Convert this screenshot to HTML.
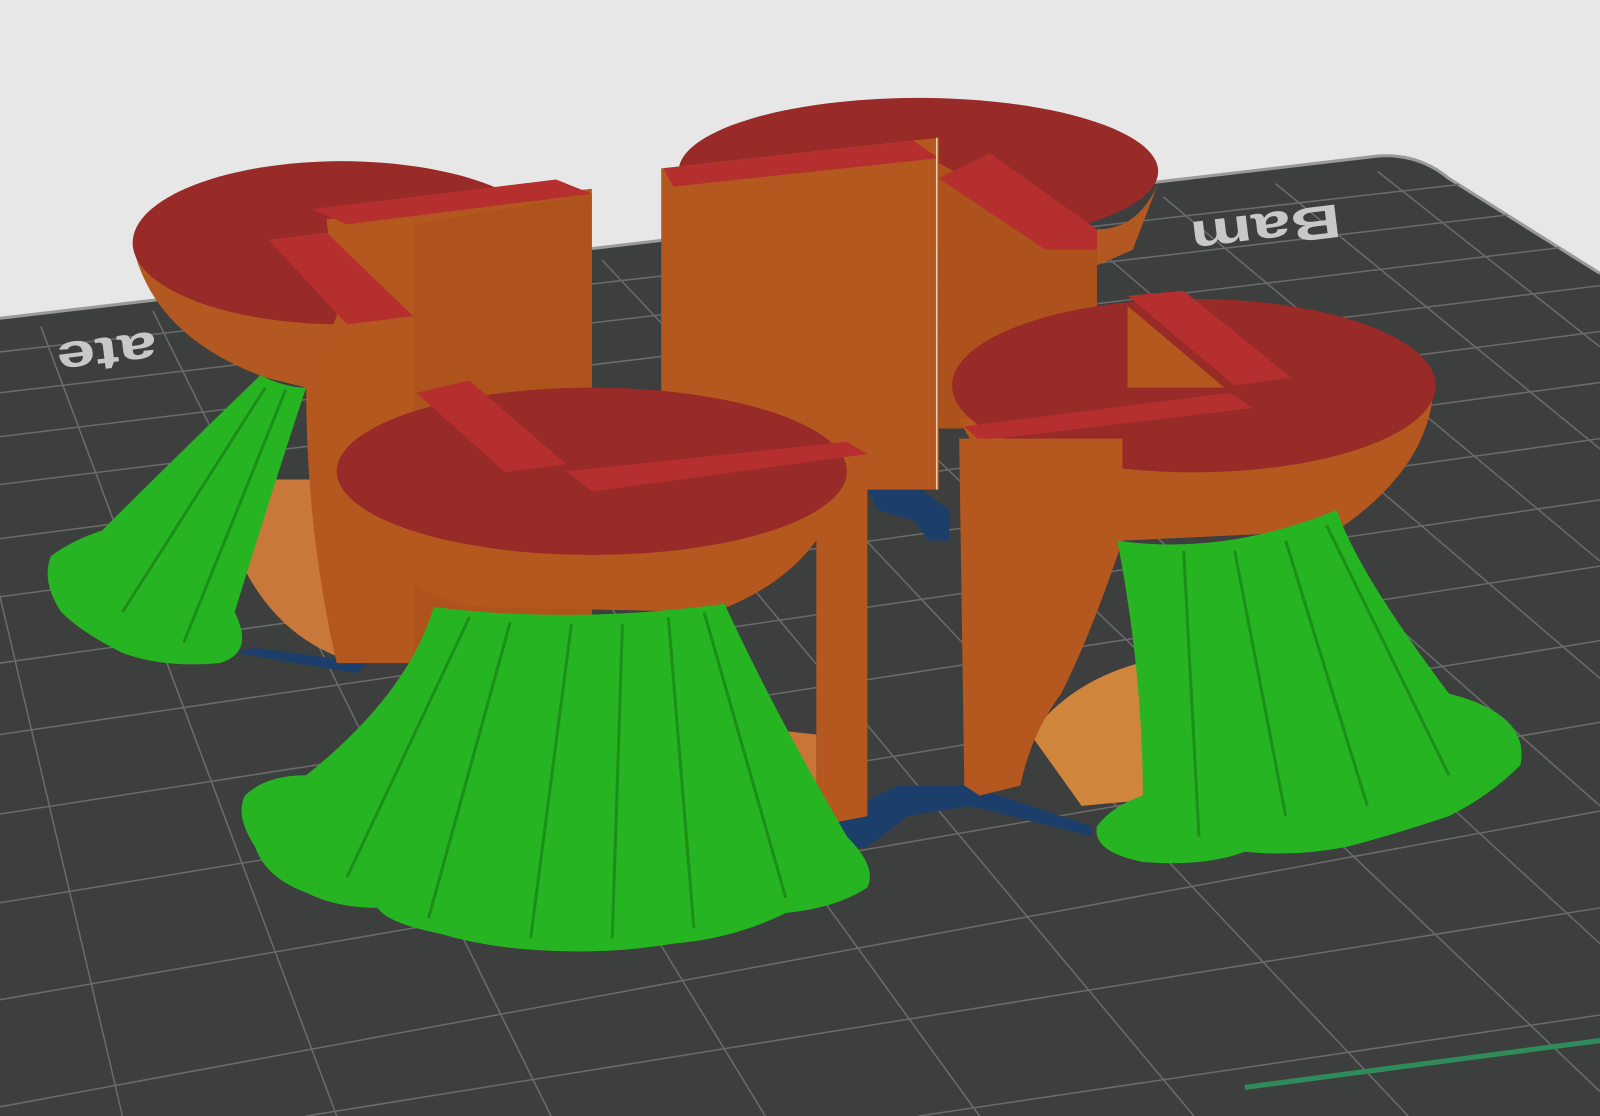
<!DOCTYPE html>
<html><head><meta charset="utf-8"><style>html,body{margin:0;padding:0;background:#e8e8e8;overflow:hidden}svg{display:block}</style></head>
<body>
<svg width="1600" height="1116" viewBox="0 0 1568 1094" preserveAspectRatio="none" xmlns="http://www.w3.org/2000/svg">
<rect width="1568" height="1094" fill="#e7e7e7"/>
<defs><clipPath id="bed"><path d="M0 312 L1350 153 Q1390 150 1420 175 L1568 268 L1568 1094 L0 1094 Z"/></clipPath></defs>
<path d="M0 312 L1350 153 Q1390 150 1420 175 L1568 268 L1568 1094 L0 1094 Z" fill="#3d3e3e"/>
<path d="M0 312 L1350 153 Q1390 150 1420 175 L1568 268" fill="none" stroke="#9a9a9a" stroke-width="3"/>
<g clip-path="url(#bed)" stroke="#6a6b6b" stroke-width="1.5" fill="none">
<path d="M0 345 L1568 165"/><path d="M0 385 L1568 200"/><path d="M0 428 L1568 238"/><path d="M0 475 L1568 280"/><path d="M0 528 L1568 325"/><path d="M0 585 L1568 375"/><path d="M0 650 L1568 430"/><path d="M0 720 L1568 490"/><path d="M0 798 L1568 555"/><path d="M0 885 L1568 628"/><path d="M0 980 L1568 708"/><path d="M0 1085 L1568 795"/><path d="M300 1094 L1568 890"/><path d="M900 1094 L1568 995"/>
<path d="M-60 330 L120 1094"/><path d="M40 320 L330 1094"/><path d="M150 305 L540 1094"/><path d="M260 292 L750 1094"/><path d="M370 280 L960 1094"/><path d="M480 268 L1170 1094"/><path d="M590 255 L1380 1094"/><path d="M700 242 L1568 1070"/><path d="M810 230 L1568 925"/><path d="M920 218 L1568 790"/><path d="M1030 205 L1568 665"/><path d="M1140 193 L1568 550"/><path d="M1250 180 L1568 440"/><path d="M1350 168 L1568 340"/>
</g>
<text x="0" y="0" transform="translate(1312,200) rotate(173) scale(1.1,0.75)" font-family="Liberation Sans, sans-serif" font-weight="bold" font-size="62" fill="#c8c8c8">Bam</text>
<text x="0" y="0" transform="translate(152,325) rotate(173) scale(1.1,0.75)" font-family="Liberation Sans, sans-serif" font-weight="bold" font-size="62" fill="#c8c8c8">ate</text>
<path d="M1220 1066 L1568 1020" stroke="#2f8c5a" stroke-width="5"/>
<!-- blue base bits -->
<path d="M850 478 L900 478 L930 500 L930 530 L910 530 L895 510 L860 500 Z" fill="#1b3e6b"/>
<path d="M230 640 L350 660 L360 650 L250 635 Z" fill="#1b3e6b"/>
<path d="M820 800 L880 770 L900 770 L950 770 L1070 810 L1070 820 L950 790 L890 800 L850 830 L815 835 Z" fill="#1b3e6b"/>
<!-- back-left puck -->
<path d="M130 240 Q150 330 260 370 L300 380 Q330 340 350 310 L360 230 Z" fill="#b35820"/>
<path d="M210 470 Q240 620 350 650 L360 470 Z" fill="#c8783a"/>
<ellipse cx="335" cy="238" rx="205" ry="80" fill="#982a27"/>
<!-- left tall block -->
<path d="M320 215 L580 185 L580 650 L330 650 Q300 520 300 380 L330 310 Z" fill="#b5581f"/>
<path d="M405 220 L580 190 L580 650 L405 650 Z" fill="#ae531c"/>
<path d="M305 205 L545 176 L580 190 L340 220 Z" fill="#b52f2f"/>
<path d="M263 235 L320 228 L405 310 L340 318 Z" fill="#b52f2f"/>
<!-- back middle puck -->
<ellipse cx="900" cy="168" rx="235" ry="72" fill="#982a27"/>
<path d="M1075 225 Q1115 225 1135 180 L1110 245 L1075 260 Z" fill="#b35820"/>
<!-- middle wall -->
<path d="M648 165 L920 135 L920 480 L648 480 Z" fill="#b5581f"/>
<path d="M920 160 L1075 240 L1075 420 L920 420 Z" fill="#ad521c"/>
<path d="M650 165 L895 138 L920 155 L660 183 Z" fill="#b52f2f"/>
<path d="M920 175 L970 150 L1075 225 L1075 245 L1025 245 Z" fill="#b52f2f"/>
<line x1="918" y1="135" x2="918" y2="480" stroke="#e8d0b8" stroke-width="1.5"/>
<!-- right puck -->
<path d="M940 410 Q980 500 1100 530 L1310 520 Q1400 460 1405 380 Z" fill="#b5581f"/>
<ellipse cx="1170" cy="378" rx="237" ry="85" fill="#982a27"/>
<path d="M1105 290 L1160 285 L1265 370 L1210 378 Z" fill="#b52f2f"/>
<path d="M945 418 L1205 385 L1228 400 L960 432 Z" fill="#b52f2f"/>
<path d="M1105 300 L1105 380 L1200 380 Z" fill="#b5581f"/>
<!-- right block -->
<path d="M1010 720 Q1070 640 1200 640 L1330 660 L1385 760 L1060 790 Z" fill="#d0853c"/>
<path d="M940 430 L1100 430 L1100 530 Q1070 620 1040 680 Q1010 720 1000 770 L960 780 L945 770 Z" fill="#b5581f"/>
<!-- right green supports -->
<path d="M1095 530 Q1200 545 1310 500 Q1330 560 1420 680 Q1500 700 1490 750 Q1460 780 1420 800 Q1360 820 1320 830 Q1270 840 1220 835 Q1180 850 1120 845 Q1070 835 1075 810 Q1090 790 1120 780 Q1120 660 1095 530 Z" fill="#27b422"/>
<g stroke="#1c8f18" stroke-width="3" fill="none"><path d="M1160 540 L1175 820"/><path d="M1210 540 L1260 800"/><path d="M1260 530 L1340 790"/><path d="M1300 515 L1420 760"/></g>
<!-- front block -->
<path d="M800 450 L850 445 L850 800 L800 810 Z" fill="#b5581f"/>
<!-- front-left puck -->
<path d="M330 465 Q360 580 470 595 L700 600 Q810 560 830 460 Z" fill="#b5581f"/>
<path d="M420 640 Q600 700 800 720 L800 830 L430 860 Z" fill="#c97537"/>
<ellipse cx="580" cy="462" rx="250" ry="82" fill="#982a27"/>
<path d="M408 385 L460 373 L555 455 L495 463 Z" fill="#b52f2f"/>
<path d="M555 462 L830 433 L850 445 L580 482 Z" fill="#b52f2f"/>
<!-- front green supports -->
<path d="M425 595 Q560 612 710 592 Q760 700 830 820 Q860 850 850 870 Q820 890 770 895 Q720 920 660 925 Q600 935 540 932 Q480 930 430 915 Q380 905 370 890 Q330 890 300 875 Q260 860 250 830 Q230 800 240 780 Q260 760 300 760 Q400 680 425 595 Z" fill="#27b422"/>
<g stroke="#1c8f18" stroke-width="3" fill="none"><path d="M460 605 L340 860"/><path d="M500 610 L420 900"/><path d="M560 612 L520 920"/><path d="M610 612 L600 920"/><path d="M655 605 L680 910"/><path d="M690 600 L770 880"/></g>
<!-- back-left green supports -->
<path d="M255 368 Q280 380 300 380 Q270 470 230 600 Q250 640 215 650 Q160 655 120 640 Q80 620 60 600 Q40 570 50 545 Q70 530 100 520 Q170 450 255 368 Z" fill="#27b422"/>
<g stroke="#1c8f18" stroke-width="3" fill="none"><path d="M260 380 L120 600"/><path d="M280 382 L180 630"/></g>
</svg>
</body></html>
